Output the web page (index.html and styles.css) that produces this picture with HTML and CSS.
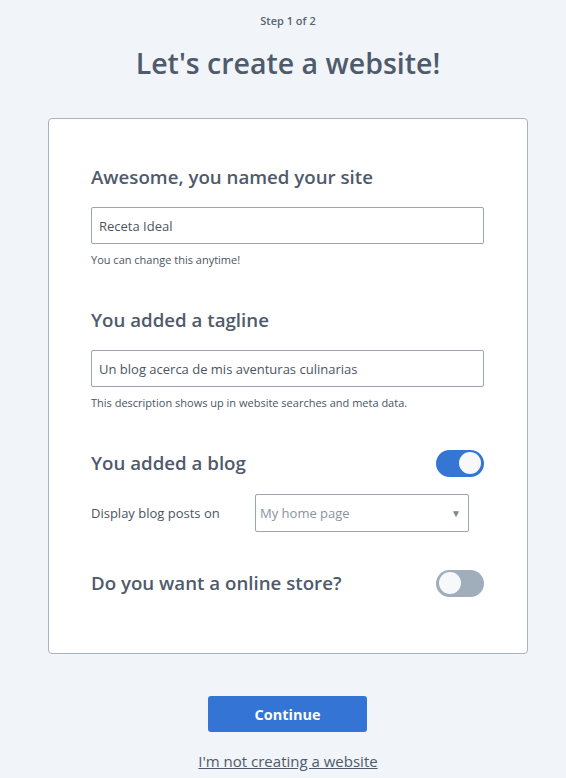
FILE: index.html
```html
<!DOCTYPE html>
<html>
<head>
<meta charset="utf-8">
<link rel="stylesheet" href="styles.css">
</head>
<body>
<div class="page">
  <div class="step">Step 1 of 2</div>
  <h1 class="title">Let's create a website!</h1>
  <div class="card">
    <section class="group">
      <h2 class="heading">Awesome, you named your site</h2>
      <div class="input">Receta Ideal</div>
      <p class="help">You can change this anytime!</p>
    </section>
    <section class="group">
      <h2 class="heading">You added a tagline</h2>
      <div class="input">Un blog acerca de mis aventuras culinarias</div>
      <p class="help">This description shows up in website searches and meta data.</p>
    </section>
    <section class="group blog">
      <div class="row">
        <h2 class="heading">You added a blog</h2>
        <span class="toggle on"><span class="knob"></span></span>
      </div>
      <div class="display-row">
        <span class="label">Display blog posts on</span>
        <div class="select"><span>My home page</span><span class="caret">▼</span></div>
      </div>
    </section>
    <section class="group">
      <div class="row">
        <h2 class="heading">Do you want a online store?</h2>
        <span class="toggle off"><span class="knob"></span></span>
      </div>
    </section>
  </div>
  <div class="actions">
    <button class="btn">Continue</button>
    <a class="link" href="#">I'm not creating a website</a>
  </div>
</div>
</body>
</html>
```
FILE: styles.css
```css
* { box-sizing: border-box; }
html, body { margin: 0; padding: 0; }
body {
  background: #f1f4f8;
  font-family: "Open Sans", "Noto Sans", sans-serif;
  color: #4f5a6b;
  width: 566px;
  height: 778px;
  overflow: hidden;
}
.page {
  padding-left: 48px;
  width: 528px;
  box-sizing: content-box;
}
.step {
  width: 480px;
  text-align: center;
  font-size: 11px;
  font-weight: 600;
  color: #5a6474;
  padding-top: 13px;
  line-height: 15px;
}
.title {
  width: 480px;
  margin: 17px 0 0;
  text-align: center;
  font-size: 28.5px;
  font-weight: 600;
  color: #4f5a6b;
  line-height: 36px;
}
.card {
  width: 480px;
  margin-top: 37px;
  background: #fff;
  border: 1px solid #a9b3bd;
  border-radius: 4px;
  padding: 44px 43px 0 42px;
  height: 536px;
}
.group { margin-bottom: 39px; }
.group.blog { margin-bottom: 37px; }
.heading {
  margin: 0;
  font-size: 18.7px;
  font-weight: 600;
  color: #4f5a6b;
  line-height: 28px;
}
.input {
  margin-top: 16px;
  height: 37px;
  border: 1px solid #9aa5b1;
  border-radius: 2px;
  padding: 0 7px;
  display: flex;
  align-items: center;
  font-size: 13px;
  color: #4b5563;
}
.help {
  margin: 8px 0 0;
  font-size: 11px;
  color: #4b5563;
  line-height: 15px;
}
.row {
  display: flex;
  justify-content: space-between;
  align-items: center;
}
.toggle {
  width: 48px;
  height: 27px;
  border-radius: 14px;
  display: flex;
  align-items: center;
  padding: 0 3px;
}
.toggle .knob {
  width: 22px;
  height: 22px;
  border-radius: 50%;
  background: #f7f8fa;
}
.toggle.on { background: #3575d3; justify-content: flex-end; }
.toggle.off { background: #a0aebb; justify-content: flex-start; }
.display-row {
  display: flex;
  align-items: center;
  margin-top: 17px;
}
.label {
  font-size: 13px;
  color: #4b5563;
  width: 164px;
}
.select {
  width: 214px;
  height: 38px;
  border: 1px solid #9aa5b1;
  border-radius: 2px;
  display: flex;
  align-items: center;
  justify-content: space-between;
  padding: 0 7px 0 4px;
  font-size: 13px;
  color: #8a939e;
}
.caret { font-size: 10px; color: #7d8691; }
.actions {
  width: 480px;
  display: flex;
  flex-direction: column;
  align-items: center;
  margin-top: 42px;
}
.btn {
  width: 159px;
  height: 36px;
  background: #3474d4;
  color: #fff;
  border: none;
  border-radius: 3px;
  font-family: "Open Sans", sans-serif;
  font-size: 14.5px;
  font-weight: 700;
  padding: 0;
  margin-left: -1px;
}
.link {
  margin-top: 19px;
  font-size: 15px;
  color: #4f5a6b;
  text-decoration: underline;
  line-height: 20px;
}
```
